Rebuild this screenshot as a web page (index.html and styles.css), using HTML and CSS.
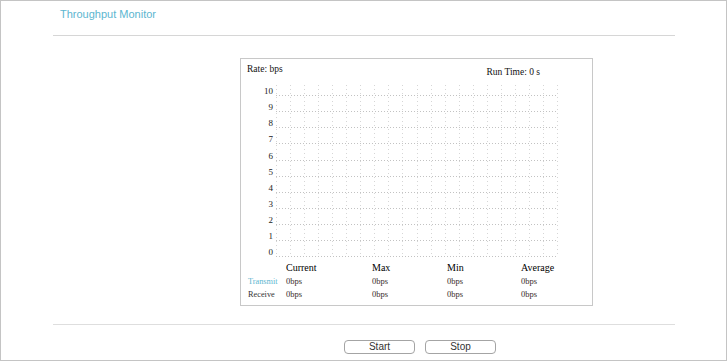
FILE: index.html
```html
<!DOCTYPE html>
<html>
<head>
   <meta charset="UTF-8">
   <title>Throughput Monitor</title>
   <link rel="stylesheet" href="styles.css">
</head>
<body>
   <div class="frame">
      <div class="content">
         <div class="title">Throughput Monitor</div>

         <div class="chart">
            <div class="chart-head">
               <span class="rate">Rate: bps</span>
               <span class="runtime">Run Time: 0 s</span>
            </div>
            <svg class="plot" width="351" height="181" viewBox="0 0 351 181">
               <path class="grid-v" d="M35.5 5V176 M49.5 5V176 M63.5 5V176 M77.5 5V176 M91.5 5V176 M105.5 5V176 M119.5 5V176 M133.5 5V176 M147.5 5V176 M161.5 5V176 M176.5 5V176 M190.5 5V176 M204.5 5V176 M218.5 5V176 M232.5 5V176 M246.5 5V176 M260.5 5V176 M274.5 5V176 M288.5 5V176 M302.5 5V176 M316.5 5V176"/>
               <path class="grid-h" d="M35 15.5H317 M35 31.5H317 M35 47.5H317 M35 63.5H317 M35 80.5H317 M35 96.5H317 M35 112.5H317 M35 128.5H317 M35 144.5H317 M35 160.5H317 M35 176.5H317"/>
               <g class="axis">
                  <text x="32" y="13.5">10</text>
                  <text x="32" y="29.5">9</text>
                  <text x="32" y="45.5">8</text>
                  <text x="32" y="61.5">7</text>
                  <text x="32" y="78.5">6</text>
                  <text x="32" y="94.5">5</text>
                  <text x="32" y="110.5">4</text>
                  <text x="32" y="126.5">3</text>
                  <text x="32" y="142.5">2</text>
                  <text x="32" y="158.5">1</text>
                  <text x="32" y="174.5">0</text>
               </g>
            </svg>
            <div class="stats">
               <span></span>
               <span class="col-head">Current</span>
               <span class="col-head">Max</span>
               <span class="col-head">Min</span>
               <span class="col-head">Average</span>

               <span class="tx">Transmit</span>
               <span class="val">0bps</span>
               <span class="val">0bps</span>
               <span class="val">0bps</span>
               <span class="val">0bps</span>

               <span class="rx">Receive</span>
               <span class="val">0bps</span>
               <span class="val">0bps</span>
               <span class="val">0bps</span>
               <span class="val">0bps</span>
            </div>
         </div>

         <div class="foot">
            <button class="btn">Start</button>
            <button class="btn">Stop</button>
         </div>
      </div>
   </div>
</body>
</html>
```

FILE: styles.css
```css
      body {
         margin: 0;
         background-color: #fff;
         font-family: "Liberation Sans", Arial, sans-serif;
      }
      .frame {
         box-sizing: border-box;
         height: 361px;
         border: 1px solid #c4c4c4;
      }
      .content {
         margin-left: 52px;
         width: 622px;
      }
      .title {
         box-sizing: border-box;
         height: 35px;
         padding: 6px 0 0 7px;
         font-size: 11px;
         line-height: 14px;
         color: #5cb6d0;
         border-bottom: 1px solid #d6d6d6;
      }
      .chart {
         width: 351px;
         height: 246px;
         margin: 22px 0 0 187px;
         border: 1px solid #c8c8c8;
         font-family: "Liberation Serif", "Times New Roman", serif;
         color: #111;
      }
      .chart-head {
         display: flex;
         justify-content: space-between;
         height: 21px;
         padding: 0 52px 0 6px;
         font-size: 9.5px;
      }
      .rate {
         line-height: 21px;
      }
      .runtime {
         padding-top: 3px;
         line-height: 21px;
      }
      .plot {
         display: block;
      }
      .grid-v {
         fill: none;
         stroke: #d6d6d6;
         stroke-width: 1;
         stroke-dasharray: 1 3;
      }
      .grid-h {
         fill: none;
         stroke: #c2c2c2;
         stroke-width: 1;
         stroke-dasharray: 1 2;
      }
      .axis text {
         font-family: "Liberation Serif", "Times New Roman", serif;
         font-size: 9px;
         fill: #222;
         text-anchor: end;
      }
      .stats {
         display: grid;
         grid-template-columns: 38px 86px 75px 74px auto;
         grid-template-rows: 14px 13px 13px;
         padding-left: 7px;
      }
      .stats span {
         line-height: 13px;
         white-space: nowrap;
      }
      .col-head {
         font-size: 10px;
         line-height: 14px !important;
         color: #000;
      }
      .tx {
         font-size: 8.3px;
         color: #5cb6d0;
      }
      .rx {
         font-size: 8.3px;
         color: #333;
      }
      .val {
         font-size: 8.5px;
         color: #3a2a2a;
      }
      .foot {
         margin-top: 18px;
         padding: 15px 0 0 291px;
         border-top: 1px solid #dedede;
         display: flex;
         gap: 10px;
      }
      .btn {
         width: 71px;
         height: 14px;
         padding: 0;
         border: 1px solid #a4a4a4;
         border-radius: 4px;
         background-color: #fff;
         font-family: "Liberation Sans", Arial, sans-serif;
         font-size: 10px;
         line-height: 12px;
         color: #333;
      }
```
